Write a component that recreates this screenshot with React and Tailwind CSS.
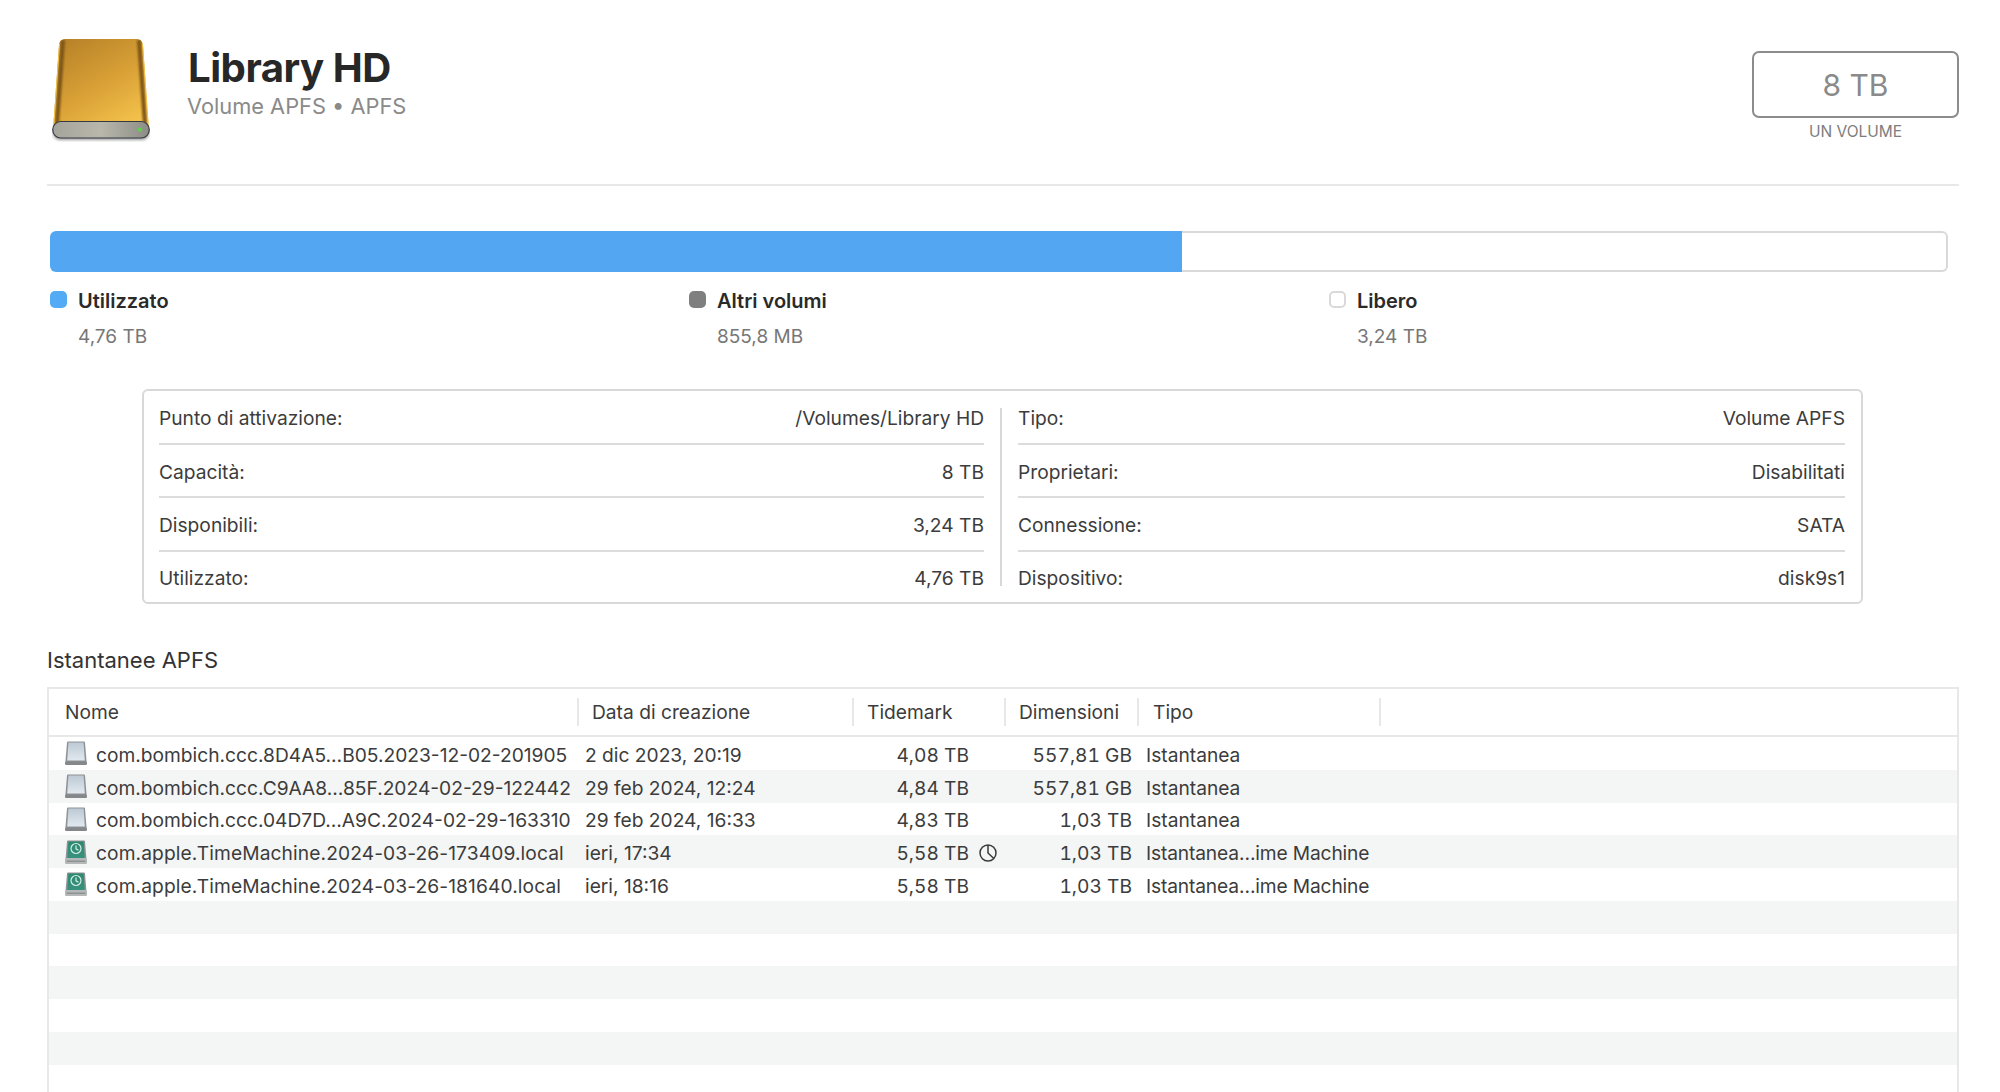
const snapshots=[
  {name:"com.bombich.ccc.8D4A5…B05.2023-12-02-201905",date:"2 dic 2023, 20:19",tide:"4,08 TB",size:"557,81 GB",type:"Istantanea"},
  {name:"com.bombich.ccc.C9AA8…85F.2024-02-29-122442",date:"29 feb 2024, 12:24",tide:"4,84 TB",size:"557,81 GB",type:"Istantanea"},
  {name:"com.bombich.ccc.04D7D…A9C.2024-02-29-163310",date:"29 feb 2024, 16:33",tide:"4,83 TB",size:"1,03 TB",type:"Istantanea"},
  {name:"com.apple.TimeMachine.2024-03-26-173409.local",date:"ieri, 17:34",tide:"5,58 TB",size:"1,03 TB",type:"Istantanea…ime Machine",tm:true,clock:true},
  {name:"com.apple.TimeMachine.2024-03-26-181640.local",date:"ieri, 18:16",tide:"5,58 TB",size:"1,03 TB",type:"Istantanea…ime Machine",tm:true},
];
const leftInfo=[["Punto di attivazione:","/Volumes/Library HD"],["Capacità:","8 TB"],["Disponibili:","3,24 TB"],["Utilizzato:","4,76 TB"]];
const rightInfo=[["Tipo:","Volume APFS"],["Proprietari:","Disabilitati"],["Connessione:","SATA"],["Dispositivo:","disk9s1"]];
const gridCols="grid grid-cols-[530px_275px_152px_133px_242px_1fr]";

// big yellow external drive
const DriveIcon=()=>(
  <svg width="98" height="104" viewBox="0 0 98 104" className="shrink-0">
    <defs>
      <linearGradient id="gold" x1="0.2" y1="0" x2="0.8" y2="1">
        <stop offset="0" stopColor="#b98429"/><stop offset="0.5" stopColor="#d9a036"/><stop offset="1" stopColor="#f6c54d"/>
      </linearGradient>
      <linearGradient id="base" x1="0" y1="0" x2="1" y2="0">
        <stop offset="0" stopColor="#a5a49b"/><stop offset="0.5" stopColor="#b9b7ac"/><stop offset="1" stopColor="#8c8c86"/>
      </linearGradient>
      <filter id="sh" x="-10%" y="-20%" width="120%" height="150%"><feGaussianBlur stdDeviation="1.500"/></filter>
      <filter id="bl" x="-100%" y="-10%" width="300%" height="120%"><feGaussianBlur stdDeviation="1"/></filter>
      <clipPath id="body"><path d="M13 1H85Q90 1 91 7L97 92H1L7 7Q7.500 1 13 1Z"/></clipPath>
    </defs>
    <rect x="1" y="88" width="96" height="14" rx="7" fill="#000" opacity="0.4" filter="url(#sh)"/>
    <path d="M13 1H85Q90 1 91 7L97 92H1L7 7Q7.500 1 13 1Z" fill="url(#gold)"/>
    <g clipPath="url(#body)" fill="none">
      <path d="M11 2L5 86" stroke="#7c5412" strokeWidth="4" filter="url(#bl)"/>
      <path d="M87 2L93 86" stroke="#7c5412" strokeWidth="4" filter="url(#bl)"/>
      <path d="M7 6L1 90" stroke="#f5c74f" strokeWidth="2"/>
      <path d="M91 6L97 90" stroke="#f5c74f" strokeWidth="2"/>
    </g>
    <rect x="0.700" y="83.500" width="96.600" height="16.500" rx="8.200" fill="url(#base)" stroke="#343a44" strokeWidth="1.200"/>
    <circle cx="88" cy="91.500" r="2" fill="#4fdc3c"/>
  </svg>
);

// small volume icon, gray for ccc and green with clock for time machine
const VolumeIcon=({tm})=>(
  <svg width="22" height="24" viewBox="0 0 22 24" className="shrink-0">
    <defs>
      <linearGradient id="vg" x1="0" y1="0" x2="0" y2="1"><stop offset="0" stopColor="#bcc9d4"/><stop offset="1" stopColor="#e2e9ef"/></linearGradient>
      <linearGradient id="vt" x1="0" y1="0" x2="0" y2="1"><stop offset="0" stopColor="#2a8a70"/><stop offset="1" stopColor="#3a927e"/></linearGradient>
    </defs>
    <path d="M3 .5H19Q20 .5 20 1.500L21.600 21H.4L2 1.500Q2 .5 3 .5Z" fill="#8f9294"/>
    <path d="M3.400 1.500H18.600L19.800 19.500H2.200Z" fill={tm?"url(#vt)":"url(#vg)"}/>
    <rect x="0" y={tm?18:20.500} width="22" height={tm?6:3.500} rx="1.200" fill={tm?"#b4b8b8":"#85888a"}/>
    {tm&&(
      <>
        <rect x="1.500" y="20.500" width="19" height="1.500" rx="0.700" fill="#8d9191"/>
        <g fill="none" stroke="#d6ece5" strokeWidth="1.200">
          <circle cx="11" cy="8.500" r="5"/>
          <path d="M11 5.500V8.800L13.500 10.300"/>
        </g>
      </>
    )}
  </svg>
);

const ClockIcon=()=>(
  <svg width="18" height="18" viewBox="0 0 18 18" fill="none" stroke="#3a3a3a" strokeWidth="1.500" className="shrink-0">
    <circle cx="9" cy="9" r="8"/>
    <path d="M9 1V9L14.800 14.500"/>
  </svg>
);

const InfoRow=({label,value,last})=>(
  <div className={`flex justify-between items-center h-[53.5px] ${last?"":"pt-[3px] border-b-2 border-[#dcdcdc]"}`}>
    <span>{label}</span>
    <span>{value}</span>
  </div>
);

const Legend=({color,label,value})=>(
  <div>
    <div className="flex items-center h-[20px]">
      <div className={`w-[17px] h-[17px] rounded-[5px] -mt-[5px] ${color}`}></div>
      <span className="ml-[11px] -mt-[2px] text-[20px] font-semibold text-[#2a2a2a]">{label}</span>
    </div>
    <div className="ml-[28px] mt-[15px] text-[19px] text-[#777777]">{value}</div>
  </div>
);

export default function App(){
  const rows=Array.from({length:11});
  return(
    <div className="h-[1092px] w-[2000px] overflow-hidden bg-white pl-[47px] pr-[41px] text-[19.200px] leading-[20px] text-[#3c3c3c] font-['Inter',sans-serif]">
      {/* header */}
      <div className="flex items-start h-[186px] pt-[38px] border-b-2 border-[#e8e8e8]">
        <div className="ml-[5px]"><DriveIcon/></div>
        <div className="ml-[38px] flex-1">
          <h1 className="mt-[6px] text-[40.200px] leading-[48px] font-bold tracking-[-0.5px] text-[#272727]">Library HD</h1>
          <p className="-ml-[1px] text-[21.800px] leading-[28px] text-[#8a8a8a]">Volume APFS • APFS</p>
        </div>
        <div className="w-[207px] mt-[13px] text-center">
          <div className="h-[67px] border-2 border-[#8c8c8c] rounded-[7px] flex items-center justify-center text-[30px] text-[#8a8a8a]">8 TB</div>
          <div className="mt-[4px] text-[15.500px] text-[#7d7d7d]">UN VOLUME</div>
        </div>
      </div>

      {/* usage bar */}
      <div className="flex ml-[3px] w-[1898px] h-[41px] mt-[45px]">
        <div className="w-[1132px] bg-[#53a7f2] rounded-l-[6px]"></div>
        <div className="flex-1 border-2 border-l-0 border-[#d9d9d9] rounded-r-[6px]"></div>
      </div>

      {/* legend */}
      <div className="grid grid-cols-[639px_640px_1fr] ml-[3px] mt-[20px]">
        <Legend color="bg-[#53aaf5]" label="Utilizzato" value="4,76 TB"/>
        <Legend color="bg-[#7f7f7f]" label="Altri volumi" value="855,8 MB"/>
        <Legend color="bg-white border-2 border-[#d9d9d9]" label="Libero" value="3,24 TB"/>
      </div>

      {/* info box */}
      <div className="flex ml-[95px] w-[1721px] h-[215px] mt-[42px] border-2 border-[#d8d8d8] rounded-[6px]">
        <div className="w-[840px] pl-[15px]">
          {leftInfo.map((r,i)=><InfoRow key={i} label={r[0]} value={r[1]} last={i==3}/>)}
        </div>
        <div className="w-[2px] h-[178px] bg-[#d8d8d8] self-center ml-[16px]"></div>
        <div className="flex-1 ml-[16px] mr-[16px]">
          {rightInfo.map((r,i)=><InfoRow key={i} label={r[0]} value={r[1]} last={i==3}/>)}
        </div>
      </div>

      {/* snapshots */}
      <h2 className="mt-[43px] text-[22px] leading-[26px] text-[#333333]">Istantanee APFS</h2>
      <div className="mt-[14px] h-[500px] border-2 border-b-0 border-[#e8e8e8]">
        <div className={`${gridCols} h-[48px] items-center border-b-2 border-[#e8e8e8]`}>
          <div className="pl-[16px] h-[28px] flex items-center border-r-2 border-[#e8e8e8]">Nome</div>
          <div className="pl-[13px] h-[28px] flex items-center border-r-2 border-[#e8e8e8]">Data di creazione</div>
          <div className="pl-[13px] h-[28px] flex items-center border-r-2 border-[#e8e8e8]">Tidemark</div>
          <div className="pl-[13px] h-[28px] flex items-center border-r-2 border-[#e8e8e8]">Dimensioni</div>
          <div className="pl-[14px] h-[28px] flex items-center border-r-2 border-[#e8e8e8]">Tipo</div>
        </div>
        {rows.map((_,i)=>{
          const s=snapshots[i];
          return(
            <div key={i} className={`${gridCols} h-[32.750px] items-center ${i%2==1?"bg-[#f4f5f5]":""}`}>
              {s&&<>
                <div className="flex items-center pl-[16px]"><VolumeIcon tm={s.tm}/><span className={`ml-[9px] pt-[3px] whitespace-nowrap ${s.tm?"tracking-[0.1px]":""}`}>{s.name}</span></div>
                <div className="pl-[6px] pt-[3px] whitespace-nowrap">{s.date}</div>
                <div className="flex items-center justify-end pr-[9px] pt-[3px] tabular-nums">
                  <span>{s.tide}</span>
                  <span className="w-[18px] ml-[10px]">{s.clock&&<ClockIcon/>}</span>
                </div>
                <div className="text-right pr-[7px] pt-[3px] whitespace-nowrap tabular-nums">{s.size}</div>
                <div className={`pl-[7px] pt-[3px] whitespace-nowrap ${s.tm?"tracking-[-0.15px]":""}`}>{s.type}</div>
              </>}
            </div>
          )
        })}
      </div>
    </div>
  )
}
